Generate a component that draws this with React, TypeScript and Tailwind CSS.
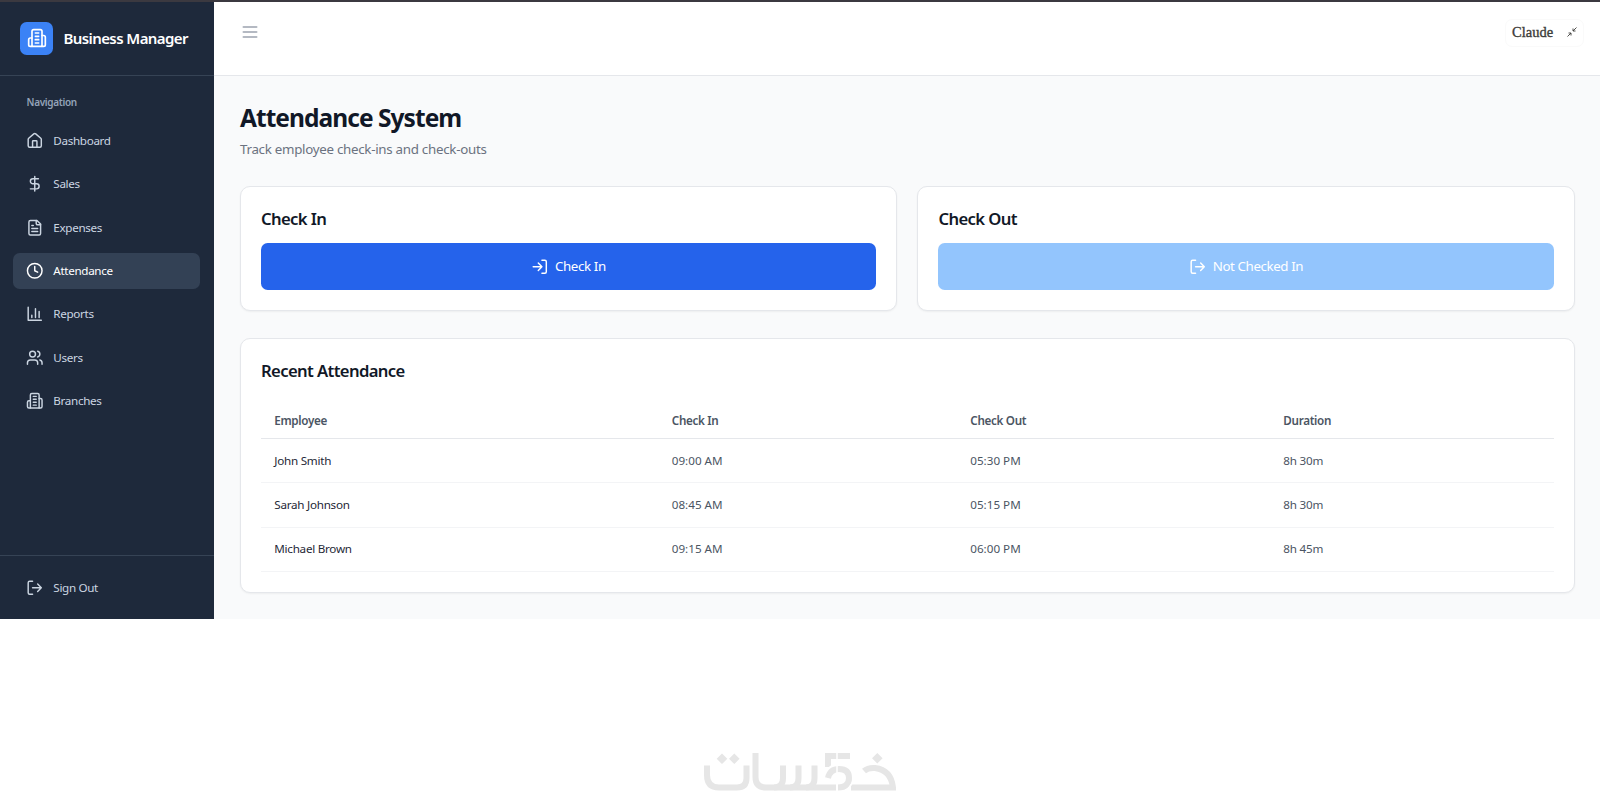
import type { ReactNode } from "react";

const iconPaths: Record<string, string[]> = {
  menu: ["M4 6h16", "M4 12h16", "M4 18h16"],
  building: [
    "M6 22V4a2 2 0 0 1 2-2h8a2 2 0 0 1 2 2v18Z",
    "M6 12H4a2 2 0 0 0-2 2v6a2 2 0 0 0 2 2h2",
    "M18 9h2a2 2 0 0 1 2 2v9a2 2 0 0 1-2 2h-2",
    "M10 6h4M10 10h4M10 14h4M10 18h4",
  ],
  home: [
    "M3 10a2 2 0 0 1 .7-1.5l7-6a2 2 0 0 1 2.6 0l7 6A2 2 0 0 1 21 10v9a2 2 0 0 1-2 2H5a2 2 0 0 1-2-2z",
    "M15 21v-8a1 1 0 0 0-1-1h-4a1 1 0 0 0-1 1v8",
  ],
  dollar: ["M12 2v20", "M17 5H9.5a3.5 3.5 0 0 0 0 7h5a3.5 3.5 0 0 1 0 7H6"],
  file: [
    "M15 2H6a2 2 0 0 0-2 2v16a2 2 0 0 0 2 2h12a2 2 0 0 0 2-2V7Z",
    "M14 2v4a2 2 0 0 0 2 2h4",
    "M10 9H8M16 13H8M16 17H8",
  ],
  clock: ["M12 2a10 10 0 1 0 0 20 10 10 0 0 0 0-20Z", "M12 6v6l4 2"],
  chart: ["M3 3v18h18", "M18 17V9M13 17V5M8 17v-3"],
  users: [
    "M16 21v-2a4 4 0 0 0-4-4H6a4 4 0 0 0-4 4v2",
    "M9 3a4 4 0 1 0 0 8 4 4 0 0 0 0-8Z",
    "M22 21v-2a4 4 0 0 0-3-3.87M16 3.13a4 4 0 0 1 0 7.75",
  ],
  logout: ["M9 21H5a2 2 0 0 1-2-2V5a2 2 0 0 1 2-2h4", "m16 17 5-5-5-5M21 12H9"],
  login: ["M15 3h4a2 2 0 0 1 2 2v14a2 2 0 0 1-2 2h-4", "m10 17 5-5-5-5M15 12H3"],
};

function Icon({ name, className = "size-[17.5px] -mx-[0.4px]" }: { name: string; className?: string }) {
  return (
    <svg
      viewBox="0 0 24 24"
      fill="none"
      stroke="currentColor"
      strokeWidth="2"
      strokeLinecap="round"
      strokeLinejoin="round"
      className={`shrink-0 ${className}`}
    >
      {iconPaths[name].map((d) => (
        <path key={d} d={d} />
      ))}
    </svg>
  );
}

const navItems = [
  { label: "Dashboard", icon: "home" },
  { label: "Sales", icon: "dollar" },
  { label: "Expenses", icon: "file" },
  { label: "Attendance", icon: "clock", active: true },
  { label: "Reports", icon: "chart" },
  { label: "Users", icon: "users" },
  { label: "Branches", icon: "building" },
];

const records = [
  { employee: "John Smith", checkIn: "09:00 AM", checkOut: "05:30 PM", duration: "8h 30m" },
  { employee: "Sarah Johnson", checkIn: "08:45 AM", checkOut: "05:15 PM", duration: "8h 30m" },
  { employee: "Michael Brown", checkIn: "09:15 AM", checkOut: "06:00 PM", duration: "8h 45m" },
];

function Sidebar() {
  return (
    <aside className="w-[213.6px] shrink-0 bg-[#1e293b] text-[#cbd5e1] flex flex-col tracking-[-0.33px]">
      <div className="h-[74px] shrink-0 pl-5 pt-px flex items-center gap-[10px] border-b border-[#364355]">
        <div className="size-[33.4px] rounded-[6.7px] bg-[#3b82f6] text-white flex items-center justify-center">
          <Icon name="building" className="size-5" />
        </div>
        <span className="text-[15px] font-semibold text-white tracking-[-0.58px] whitespace-nowrap">
          Business Manager
        </span>
      </div>

      <nav className="flex-1 px-[13.3px] pt-5">
        <div className="px-[13.3px] h-[13.3px] mb-[13.8px] leading-[13.3px] text-[10px] font-semibold text-[#94a3b8]">
          Navigation
        </div>
        <div className="flex flex-col gap-[6.67px]">
          {navItems.map((item) => (
            <a
              key={item.label}
              className={`h-[36.67px] px-[13.3px] flex items-center gap-[10px] rounded-[6.7px] text-[11.67px] ${
                item.active ? "bg-[#334155] text-white" : ""
              }`}
            >
              <Icon name={item.icon} />
              <span>{item.label}</span>
            </a>
          ))}
        </div>
      </nav>

      <div className="h-[64px] pl-[26.6px] flex items-center gap-[10px] border-t border-[#364355] text-[11.67px]">
        <Icon name="logout" />
        <span>Sign Out</span>
      </div>
    </aside>
  );
}

function Card({ title, className, children }: { title: string; className: string; children: ReactNode }) {
  return (
    <section className={`bg-white rounded-[10px] border border-[#e5e7eb] shadow-xs px-5 pt-5 ${className}`}>
      <h2 className="text-[16.67px] leading-[23.3px] font-semibold tracking-[-0.62px] text-[#111827]">{title}</h2>
      {children}
    </section>
  );
}

// Watermark under the app window
function Watermark() {
  return (
    <svg viewBox="0 0 192 38" className="w-[192px] h-[38px]" fill="none" stroke="#e6e6e6" strokeWidth="6">
      <path d="M3 12.500V22Q3 34.500 15 34.500H33Q42.500 34.500 42.500 25V12.500" />
      <path d="M51.500 0V24Q51.500 34.500 62 34.500H132" />
      <path d="M79 12.500V25Q79 34.500 70 34.500M94.500 12.500V25Q94.500 34.500 86 34.500M110.500 12.500V25Q110.500 34.500 102 34.500" />
      <path d="M146 3H124V14M124 25Q126 16 135 16Q145 16 145 25Q145 34.500 134 34.500" />
      <path d="M160 18Q164 14.500 171 15Q187 17 189 34.500H147" />
      <path d="M133 0V38" stroke="#fff" strokeWidth="1.5" />
      <path d="M119 19 130 11" stroke="#fff" strokeWidth="1.5" />
      <path d="M151 20Q150 32 141 38" stroke="#fff" strokeWidth="1.8" />
      <path
        d="M18 .5l5.300 5.300-5.300 5.300-5.300-5.300zM30.300.5l5.300 5.300-5.300 5.300-5.300-5.300zM173.300 0l5.300 5.300-5.300 5.300-5.300-5.300z"
        fill="#e6e6e6"
        stroke="none"
      />
    </svg>
  );
}

export default function App() {
  return (
    <div className="h-[807px] overflow-hidden bg-white font-['Noto_Sans',sans-serif] flex flex-col">
      <div className="h-[1.5px] shrink-0 bg-[#3b3940]" />
      <div className="h-[617.8px] shrink-0 flex">
        <Sidebar />
        <div className="flex-1 bg-[#f9fafb]">
          <header className="h-[74px] bg-white border-b border-[#e5e7eb] flex justify-between">
            <Icon name="menu" className="size-5 mt-[20px] ml-[26.9px] text-[#9ca3af]" />
            <div className="w-[79px] h-[28px] mt-[17px] mr-[16px] pl-1.5 pr-[6px] flex items-center justify-between rounded-[7px] border border-[#fafafa]">
              <span className="font-['Liberation_Serif',serif] text-[14.500px] text-[#3d3d3a] [-webkit-text-stroke:0.35px_#3d3d3a]">
                Claude
              </span>
              <svg viewBox="0 0 10 10" className="size-[10px] mb-px" fill="none" stroke="#3d3d3a" strokeWidth="0.9">
                <path d="M9.500.5 6 4M6 1.500V4h2.500M.5 9.500 4 6M1.500 6H4v2.500" />
              </svg>
            </div>
          </header>

          <main className="pl-[26.4px] pr-[25px] pt-[26.5px]">
            <h1 className="text-[24.5px] leading-[32px] font-bold tracking-[-0.95px] text-[#111827]">
              Attendance System
            </h1>
            <p className="mt-[5px] text-[13.33px] leading-5 tracking-[-0.28px] text-[#6b7280]">
              Track employee check-ins and check-outs
            </p>

            <div className="mt-[27px] grid grid-cols-2 gap-5">
              <Card title="Check In" className="h-[125px]">
                <button className="mt-[13px] w-full h-[46.67px] rounded-[6.7px] bg-[#2563eb] text-white text-[13.33px] tracking-[-0.37px] flex items-center justify-center gap-[6.67px]">
                  <Icon name="login" />
                  Check In
                </button>
              </Card>
              <Card title="Check Out" className="h-[125px]">
                <button className="mt-[13px] w-full h-[46.67px] rounded-[6.7px] bg-[#93c5fd] text-white text-[13.33px] tracking-[-0.4px] flex items-center justify-center gap-[6.67px]">
                  <Icon name="logout" />
                  Not Checked In
                </button>
              </Card>
            </div>

            <Card title="Recent Attendance" className="mt-[26.500px] h-[255px]">
              <table className="mt-[19px] w-full table-fixed text-left text-[11.67px] leading-[16.67px]">
                <colgroup>
                  <col className="w-[397.5px]" />
                  <col className="w-[298.5px]" />
                  <col className="w-[313px]" />
                  <col />
                </colgroup>
                <thead>
                  <tr className="h-[38px] border-b border-[#e5e7eb] text-[#4b5563] tracking-[-0.31px]">
                    <th className="px-[13.3px] pt-[3px] font-semibold">Employee</th>
                    <th className="px-[13.3px] pt-[3px] font-semibold">Check In</th>
                    <th className="px-[13.3px] pt-[3px] font-semibold">Check Out</th>
                    <th className="px-[13.3px] pt-[3px] font-semibold">Duration</th>
                  </tr>
                </thead>
                <tbody>
                  {records.map((r) => (
                    <tr key={r.employee} className="h-[44.2px] border-b border-[#f3f4f6] text-[#4b5563]">
                      <td className="px-[13.3px] tracking-[-0.26px] text-[#1f2937]">{r.employee}</td>
                      <td className="px-[13.3px]">{r.checkIn}</td>
                      <td className="px-[13.3px]">{r.checkOut}</td>
                      <td className="px-[13.3px] tracking-[-0.2px]">{r.duration}</td>
                    </tr>
                  ))}
                </tbody>
              </table>
            </Card>
          </main>
        </div>
      </div>

      <div className="flex justify-center pt-[133.500px]">
        <Watermark />
      </div>
    </div>
  );
}
